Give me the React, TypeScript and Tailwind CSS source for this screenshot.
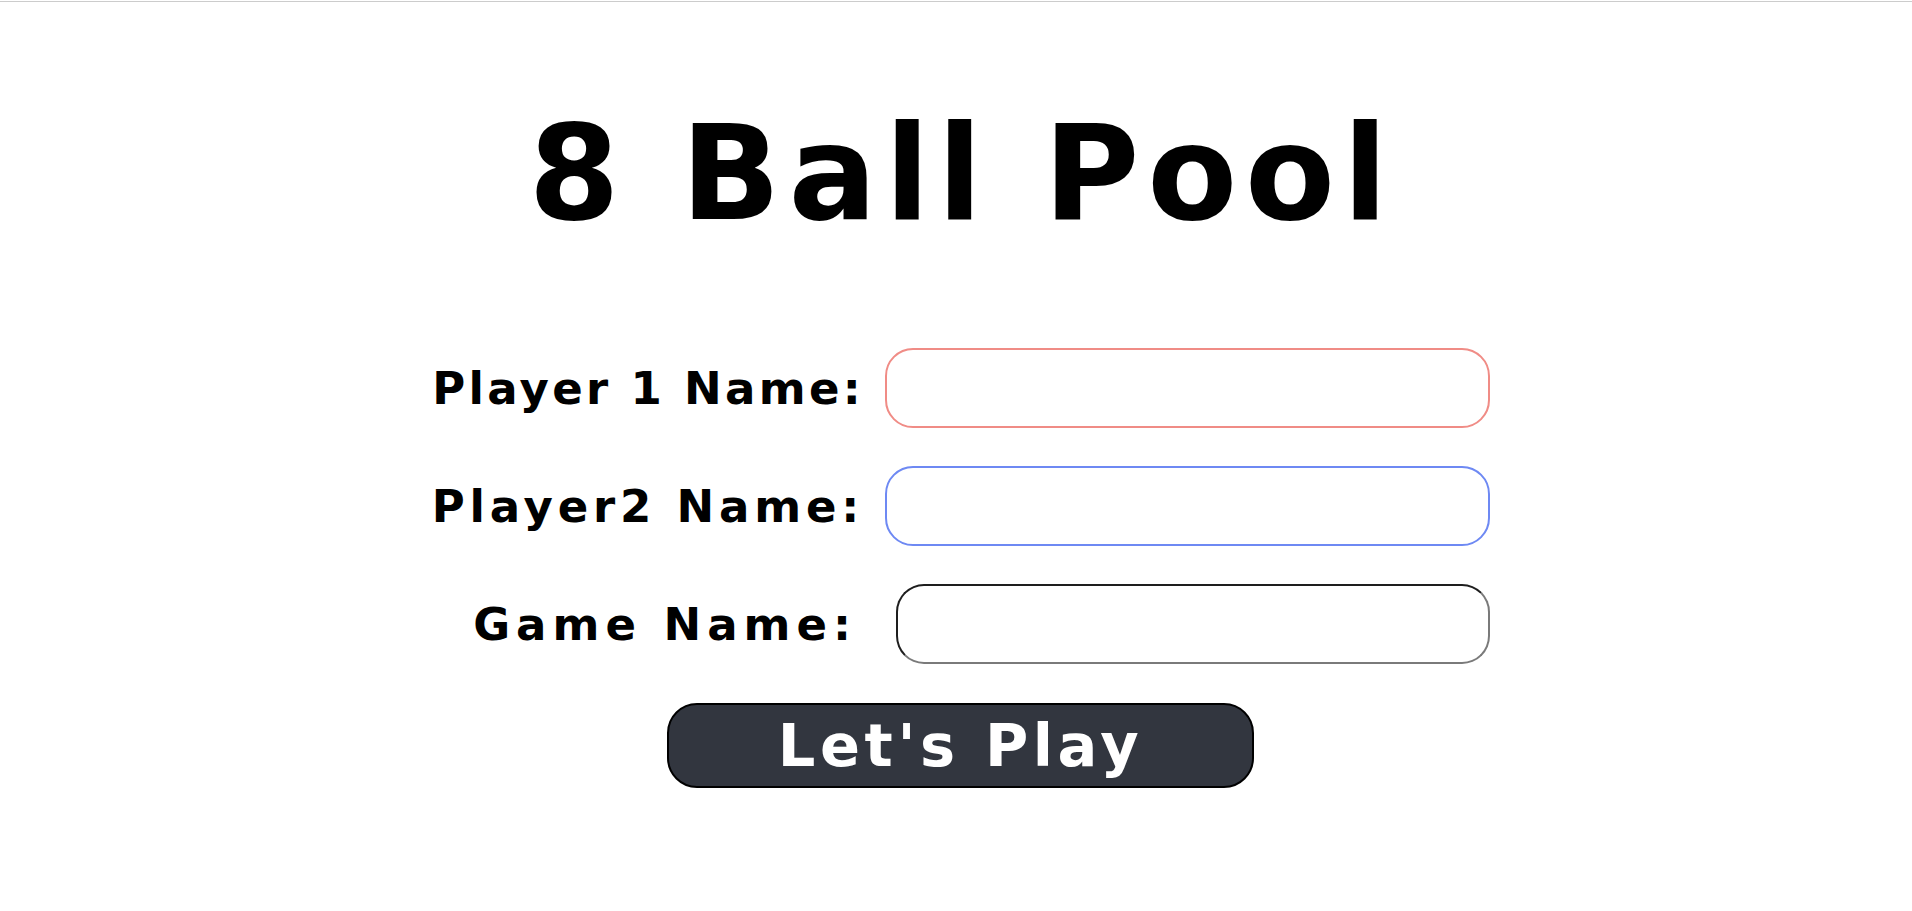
import React from "react";

export default function App() {
  const font = "font-['DejaVu_Sans',sans-serif]";
  return (
    <div className={`min-h-screen bg-white text-black ${font}`}>
      <div className="h-px mt-px bg-[#cccccc]" />
      <h1 className="mt-[106px] pl-[12px] text-center text-[131px] leading-none font-bold tracking-[7.8px]">
        8 Ball Pool
      </h1>
      <div className="mt-[109px] flex flex-col items-center gap-[38px]">
        <div className="w-[1057px] ml-[11px] flex items-center justify-end">
          <label className="shrink-0 whitespace-nowrap text-[45px] leading-none font-bold tracking-[3.3px]">Player 1 Name:</label>
          <input
            type="text"
            className="shrink-0 ml-[21px] w-[605px] h-[80px] rounded-[28px] border-2 border-[#f08c86] bg-white outline-none"
          />
        </div>
        <div className="w-[1057px] ml-[11px] flex items-center justify-end">
          <label className="shrink-0 whitespace-nowrap text-[45px] leading-none font-bold tracking-[4.8px]">Player2 Name:</label>
          <input
            type="text"
            className="shrink-0 ml-[21px] w-[605px] h-[80px] rounded-[28px] border-2 border-[#6e89f3] bg-white outline-none"
          />
        </div>
        <div className="w-[1057px] ml-[11px] flex items-center justify-end">
          <label className="shrink-0 whitespace-nowrap text-[45px] leading-none font-bold tracking-[6px]">Game Name:</label>
          <input
            type="text"
            className="shrink-0 ml-[39px] w-[594px] h-[80px] rounded-[28px] border-2 border-[#7a7a7a] border-t-[#1e1e1e] border-l-[#1e1e1e] bg-white outline-none"
          />
        </div>
      </div>
      <div className="mt-[39px] flex justify-center">
        <button className="ml-[9px] w-[587px] h-[85px] rounded-[30px] border-2 border-black bg-[#32363f] text-white text-[59px] leading-none font-bold tracking-[4.6px]">
          Let's Play
        </button>
      </div>
    </div>
  );
}
